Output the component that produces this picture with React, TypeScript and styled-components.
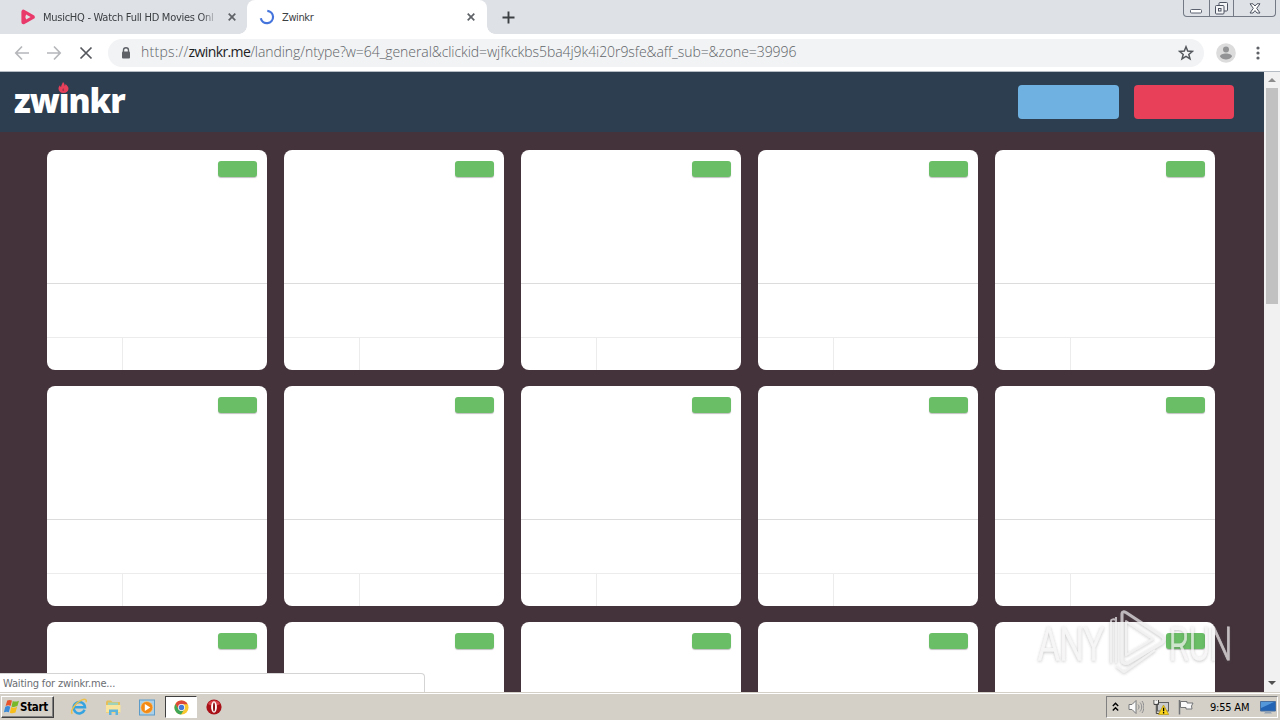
import React from "react";
import styled, { createGlobalStyle } from "styled-components";

const GlobalStyle = createGlobalStyle`
  * {
    box-sizing: border-box;
  }

  body {
    margin: 0;
    overflow: hidden;
    font-family: "DejaVu Sans Condensed", "DejaVu Sans", sans-serif;
    font-size: 11px;
  }

  svg {
    display: block;
    flex-shrink: 0;
  }
`;

const Screen = styled.div`
  position: relative;
  display: flex;
  flex-direction: column;
  width: 1280px;
  height: 720px;
  overflow: hidden;
`;

/* browser chrome */

const TabStrip = styled.div`
  display: flex;
  height: 34px;
  background-color: #dee1e6;
`;

const Tab = styled.div<{ $active?: boolean }>`
  position: relative;
  display: flex;
  align-items: center;
  width: ${(p) => (p.$active ? "240px" : "247px")};
  padding: 0 ${(p) => (p.$active ? "12px" : "11px")} 0
    ${(p) => (p.$active ? "12px" : "20px")};
  border-radius: 8px 8px 0 0;
  background-color: ${(p) => (p.$active ? "white" : "transparent")};

  &::before,
  &::after {
    content: "";
    display: ${(p) => (p.$active ? "block" : "none")};
    position: absolute;
    bottom: 0;
    width: 8px;
    height: 8px;
  }

  &::before {
    left: -8px;
    background: radial-gradient(circle at 0 0, transparent 7.5px, white 8px);
  }

  &::after {
    right: -8px;
    background: radial-gradient(circle at 100% 0, transparent 7.5px, white 8px);
  }
`;

const TabTitle = styled.div<{ $fade?: boolean; $spacing: string }>`
  flex: 1;
  margin: 0 9px 0 7px;
  overflow: hidden;
  white-space: nowrap;
  line-height: 16px;
  padding-top: 1px;
  letter-spacing: ${(p) => p.$spacing};
  color: #3c4043;
  mask-image: ${(p) =>
    p.$fade ? "linear-gradient(to right, black 90%, transparent)" : "none"};
`;

const NewTab = styled.div`
  display: flex;
  align-items: center;
  margin-left: 15px;
`;

const WindowButtons = styled.div`
  display: flex;
  width: 93px;
  height: 17px;
  margin: 0 4px 0 auto;
  border: 1px solid #737985;
  border-top: none;
  border-radius: 0 0 4px 4px;
`;

const WindowBtn = styled.div<{ $width: number }>`
  display: flex;
  align-items: center;
  justify-content: center;
  width: ${(p) => p.$width}px;

  & + & {
    border-left: 1px solid #737985;
  }
`;

const Toolbar = styled.div`
  display: flex;
  align-items: center;
  height: 38px;
  padding: 0 14px;
  border-bottom: 1px solid #b6bcc4;
  background-color: white;
`;

const NavIcons = styled.div`
  display: flex;
  flex-shrink: 0;
  gap: 16px;
  width: 94px;
`;

const AddressBar = styled.div`
  display: flex;
  flex-shrink: 0;
  align-items: center;
  width: 1096px;
  height: 28px;
  padding: 0 10px 0 12px;
  border-radius: 14px;
  background-color: #f1f3f4;
`;

const Url = styled.div`
  flex: 1;
  margin: -2px 0 0 9px;
  font-family: "Open Sans", sans-serif;
  font-size: 14px;
  font-weight: 300;
  line-height: 20px;
  letter-spacing: -0.07px;
  white-space: nowrap;
  color: #5f6368;
`;

const Scheme = styled.span`
  letter-spacing: 0.28px;
`;

const Host = styled.span`
  color: #202124;
  font-weight: 400;
  letter-spacing: -0.62px;
`;

const ToolbarEnd = styled.div`
  display: flex;
  align-items: center;
  gap: 20px;
  margin-left: 12px;
`;

/* page */

const Viewport = styled.div`
  display: flex;
  height: 620px;
  overflow: hidden;
`;

const Page = styled.div`
  width: 1264px;
  height: 620px;
  overflow: hidden;
  background-color: #44333b;
`;

const Header = styled.div`
  display: flex;
  align-items: flex-start;
  justify-content: space-between;
  height: 60px;
  padding: 13px 30px 0 14px;
  background-color: #2c3e50;
`;

const Logo = styled.div`
  position: relative;
  margin-top: -7px;
  font-family: "Open Sans", sans-serif;
  font-size: 33px;
  font-weight: 800;
  line-height: 45px;
  letter-spacing: -1px;
  color: white;
`;

const Flame = styled.div`
  position: absolute;
  top: 4px;
  left: 43px;
  width: 14px;
  height: 12px;
  padding-left: 1px;
  background-color: #2c3e50;
`;

const HeaderButtons = styled.div`
  display: flex;
  gap: 15px;
`;

const HeaderBtn = styled.button<{ $color: string; $width: number }>`
  width: ${(p) => p.$width}px;
  height: 34px;
  border: none;
  border-radius: 4px;
  background-color: ${(p) => p.$color};
`;

const Cards = styled.div`
  display: grid;
  grid-template-columns: repeat(5, 220px);
  gap: 16px 17px;
  padding: 18px 0 0 47px;
`;

const Card = styled.div`
  display: flex;
  flex-direction: column;
  height: 220px;
  border-radius: 8px;
  background-color: white;
`;

const CardPhoto = styled.div`
  display: flex;
  justify-content: flex-end;
  height: 134px;
  padding: 11px 10px;
  border-bottom: 1px solid #dcdcdc;
`;

const Badge = styled.div`
  width: 39px;
  height: 16px;
  border-radius: 3px;
  background-color: #6abf66;
  box-shadow: 0 1px 1px rgba(0, 0, 0, 0.25);
`;

const CardInfo = styled.div`
  height: 54px;
  border-bottom: 1px solid #ececec;
`;

const CardFooter = styled.div`
  width: 76px;
  height: 32px;
  border-right: 1px solid #ececec;
`;

const Scrollbar = styled.div`
  display: flex;
  flex-direction: column;
  align-items: center;
  justify-content: space-between;
  width: 16px;
  height: 620px;
  padding: 6px 0 7px;
  background-color: #f1f1f1;
`;

const Thumb = styled.div`
  width: 12px;
  height: 216px;
  margin: 6px 0 auto;
  background-color: #c1c1c1;
`;

const StatusBubble = styled.div`
  position: absolute;
  left: 0;
  top: 673px;
  width: 425px;
  height: 19px;
  padding-left: 3px;
  border: 1px solid #d4d4d4;
  border-width: 1px 1px 0 0;
  border-radius: 0 4px 0 0;
  background-color: white;
  color: #6b6e72;
  line-height: 19px;
  letter-spacing: -0.17px;
`;

const Watermark = styled.div`
  position: absolute;
  left: 1032px;
  top: 604px;
  opacity: 0.72;
`;

/* taskbar */

const Taskbar = styled.div`
  display: flex;
  align-items: center;
  height: 28px;
  padding: 1px 2px 0 1px;
  border-top: 1px solid #d4d0c8;
  box-shadow: inset 0 1px 0 white;
  background-color: #d4d0c8;
`;

const StartBtn = styled.button`
  display: flex;
  align-items: center;
  gap: 0;
  width: 53px;
  height: 22px;
  padding: 0 0 0 2px;
  border: 1px solid;
  border-color: white #404040 #404040 white;
  background-color: #d4d0c8;
  box-shadow: inset -1px -1px 0 #808080;
  font-family: "DejaVu Sans Condensed", sans-serif;
  font-size: 11.5px;
  font-weight: bold;
  letter-spacing: -0.3px;
  color: black;
`;

const QuickLaunch = styled.div`
  display: flex;
  align-items: center;
  margin-left: 8px;
`;

const LaunchItem = styled.div<{ $pressed?: boolean }>`
  display: flex;
  align-items: center;
  justify-content: center;
  width: ${(p) => (p.$pressed ? "32px" : "34px")};
  height: 22px;
  margin-left: ${(p) => (p.$pressed ? "1px" : "0")};
  border: 1px solid;
  border-color: ${(p) =>
    p.$pressed ? "#404040 white white #404040" : "transparent"};
  background-color: ${(p) => (p.$pressed ? "white" : "transparent")};
`;

const Tray = styled.div`
  display: flex;
  align-items: center;
  width: 172px;
  height: 22px;
  margin-left: auto;
  padding-left: 5px;
  border: 1px solid;
  border-color: #808080 white white #808080;
`;

const TrayIcons = styled.div`
  display: flex;
  align-items: center;
  gap: 9px;
  width: 98px;
`;

const Clock = styled.div`
  width: 50px;
  white-space: nowrap;
  letter-spacing: -0.2px;
  color: black;
`;

const CloseIcon = ({ size = 8, color = "#5f6368" }) => (
  <svg width={size} height={size} viewBox="0 0 8 8">
    <path d="M.7.7l6.6 6.6M7.3.7L.7 7.3" stroke={color} strokeWidth="1.7" />
  </svg>
);

const MusicIcon = () => (
  <svg width="16" height="16" viewBox="0 0 16 16">
    <path
      d="M3.500 2.800v10.400L12.700 8z"
      fill="white"
      stroke="#e9396b"
      strokeWidth="4.200"
      strokeLinejoin="round"
    />
    <path d="M6 5.400v5.200L10.600 8z" fill="#dee1e6" />
  </svg>
);

const Spinner = () => (
  <svg width="16" height="16" viewBox="0 0 16 16">
    <path
      d="M8.300 1.800A6.200 6.200 0 1 1 1.800 9.300"
      fill="none"
      stroke="#4575dc"
      strokeWidth="2.200"
    />
  </svg>
);

const Arrow = ({ flip = false }) => (
  <svg width="16" height="16" viewBox="0 0 16 16">
    <path
      d="M8 1.500L1.800 8 8 14.500M1.800 8H15"
      transform={flip ? "matrix(-1 0 0 1 16 0)" : undefined}
      fill="none"
      stroke="#b5b7ba"
      strokeWidth="1.700"
    />
  </svg>
);

const Lock = () => (
  <svg width="12" height="12" viewBox="0 0 12 12">
    <path
      d="M3.500 5V3.200a2.500 2.500 0 0 1 5 0V5"
      fill="none"
      stroke="#5f6368"
      strokeWidth="1.400"
    />
    <rect x="2" y="4.400" width="8" height="7.100" rx="1" fill="#5f6368" />
  </svg>
);

const Star = () => (
  <svg width="16" height="16" viewBox="0 0 16 16">
    <path
      d="M8 1.800l1.700 4.300 4.700.3-3.600 3 1.200 4.500L8 11.400l-4 2.500 1.200-4.500-3.600-3 4.700-.3z"
      fill="none"
      stroke="#54585d"
      strokeWidth="1.500"
    />
  </svg>
);

const Avatar = () => (
  <svg width="20" height="20" viewBox="0 0 20 20">
    <circle cx="10" cy="10" r="9.800" fill="#dcdcdd" />
    <circle cx="10" cy="6.400" r="3" fill="#929394" />
    <path d="M4 13.600c0-2 3-3 6-3s6 1 6 3c-1.200 2-3.500 3-6 3s-4.800-1-6-3z" fill="#929394" />
  </svg>
);

const Dots = () => (
  <svg width="4" height="14" viewBox="0 0 4 14">
    <g fill="#5f6368">
      <circle cx="2" cy="2" r="1.600" />
      <circle cx="2" cy="7" r="1.600" />
      <circle cx="2" cy="12" r="1.600" />
    </g>
  </svg>
);

const FlameIcon = () => (
  <svg width="11" height="12" viewBox="0 0 11 12">
    <path
      d="M5 0c1.500 1.300 1.700 2.500 1.500 3.700.8-.3 1-1 1-1.800C9.500 3.500 10.500 5 10.500 6.800 10.500 9.500 8.300 11 5.500 11 2.600 11 .5 9.400.5 6.800c0-1.600.6-2.600 1.500-3.500.1.900.4 1.500 1.100 1.800C3.200 3 4.300 1.800 5 0z"
      fill="#e8405a"
    />
    <path d="M5.600 9.300c-1.800-.8-1.800-2 0-3.300-.1 1.200 1.300 1.700 0 3.300z" fill="#a4344d" />
  </svg>
);

const WindowsFlag = () => (
  <svg width="16" height="16" viewBox="0 0 16 16">
    <path d="M3.200 1.600c1.800-1 3.400-.8 4.800 0L6.600 7C5.200 6.200 3.600 6.100 1.600 7z" fill="#e8552d" />
    <path d="M8.800 2c1.600.9 3.500.8 6.200-.3L13.400 7.100c-2 1-4.200 1.100-5.900.3z" fill="#79b82a" />
    <path d="M1.300 7.700c2-1 3.600-.8 5 0l-1.500 5.600c-1.400-.9-3.200-.8-5 .1z" fill="#3b8bd8" />
    <path d="M7.200 8.100c1.600.8 3.900.7 5.900-.3l-1.600 5.600c-2 1-4 1.100-5.600.3z" fill="#f7bd1b" />
  </svg>
);

const ExplorerIcon = () => (
  <svg width="18" height="18" viewBox="0 0 18 18">
    <path
      d="M14.600 11.800A5.700 5.700 0 1 1 15 9.300H5"
      fill="none"
      stroke="#35a3df"
      strokeWidth="2.500"
    />
    <path
      d="M2.300 15.700C-.3 13.200 5.500 4.400 12 1.900c3.300-1.200 5-.5 4 2.300"
      fill="none"
      stroke="#ecc04a"
      strokeWidth="1.500"
    />
  </svg>
);

const FolderIcon = () => (
  <svg width="17" height="17" viewBox="0 0 17 17">
    <path d="M1 3l1-1.500h4L7.500 3H15v11H1z" fill="#e5bf59" />
    <path d="M3 3.500h10v4H3z" fill="#9ed2ba" />
    <path d="M1 6h14.500v7.500H1z" fill="#f8e49c" />
    <path d="M4 16v-5.500h9V16h-2.500v-3h-4v3z" fill="#5cb4dd" />
  </svg>
);

const MediaIcon = () => (
  <svg width="16" height="17" viewBox="0 0 16 17">
    <rect x=".5" y="1" width="15" height="15" fill="#a9d0ea" stroke="#5d9cc9" />
    <circle cx="7.800" cy="8.500" r="6" fill="#f48a16" stroke="#fbd28f" strokeWidth=".6" />
    <path d="M5.800 4.900v7.200l5.500-3.600z" fill="white" />
  </svg>
);

const ChromeIcon = () => (
  <svg width="15" height="15" viewBox="0 0 16 16">
    <circle cx="8" cy="8" r="7.500" fill="#f9c72f" />
    <path d="M1.500 4.200A7.500 7.500 0 0 1 14.500 4.400H8L4.800 9.800z" fill="#dc4839" />
    <path d="M1.500 4.200A7.500 7.500 0 0 0 7.500 15.500L11 9.800 8 12 4.800 9.800z" fill="#3fa557" />
    <circle cx="8" cy="8" r="3.700" fill="white" />
    <circle cx="8" cy="8" r="2.900" fill="#4679d8" />
  </svg>
);

const OperaIcon = () => (
  <svg width="16" height="16" viewBox="0 0 16 16">
    <circle cx="8" cy="8" r="7.600" fill="#a91119" />
    <path d="M2 5a6.800 6.800 0 0 1 12 0c-3 2-9 2-12 0z" fill="#d9434a" />
    <ellipse cx="8" cy="8" rx="2.900" ry="5.800" fill="white" />
    <ellipse cx="8" cy="8" rx="1" ry="4.500" fill="#8d1015" />
  </svg>
);

const SpeakerIcon = () => (
  <svg width="16" height="16" viewBox="0 0 16 16">
    <path d="M1 5.500h3L8 1.500v13l-4-4H1z" fill="#fafafa" stroke="#77787a" />
    <path
      d="M10 5.500c1.400 1.500 1.400 3.500 0 5M12 3.500c2.300 2.600 2.300 6.400 0 9M14 2c2.500 3.500 2.500 8.500 0 12"
      fill="none"
      stroke="#8b8c8e"
    />
  </svg>
);

const NetworkIcon = () => (
  <svg width="16" height="16" viewBox="0 0 16 16">
    <rect x="4.500" y="3.500" width="11" height="8.500" fill="#c9cbcd" stroke="#5e6062" />
    <path d="M1 1v4.500h4.500V1M3.300 1v3M3.300 6v8.500H8" fill="none" stroke="#444" />
    <path d="M1.500 1.500h3.500v3h-3.500z" fill="#f4f4f4" />
    <path d="M10.500 6L15.700 15.500H5.500z" fill="#fbd51b" stroke="#b3930b" strokeWidth=".7" />
    <path d="M10.600 8.800v3.400M10.600 13v1.400" stroke="black" strokeWidth="1.300" />
  </svg>
);

const FlagIcon = () => (
  <svg width="17" height="16" viewBox="0 0 17 16">
    <path d="M2.500 2.500h6.500v1.500h6l-1.500 3 .5 3H8V8.500H2.500z" fill="#fafafa" stroke="#737476" />
    <path d="M1.500 1v14.500" stroke="#737476" strokeWidth="1.500" />
  </svg>
);

const MonitorIcon = () => (
  <svg width="16" height="15" viewBox="0 0 16 15">
    <path d="M.5 1.500h15v9.500H.5z" fill="#2464b5" stroke="#496f9f" />
    <path d="M1 2h13L1 8z" fill="#5598da" />
    <path d="M6 11h4l2 2.500H4z" fill="#93a2b3" />
  </svg>
);

const CardItem = () => (
  <Card>
    <CardPhoto>
      <Badge />
    </CardPhoto>
    <CardInfo />
    <CardFooter />
  </Card>
);

const WatermarkLogo = () => (
  <svg width="206" height="76" viewBox="0 0 206 76">
    <defs>
      <filter id="soft" x="-10%" y="-10%" width="120%" height="130%">
        <feDropShadow dx="0" dy="1" stdDeviation="1.500" floodColor="#555" floodOpacity=".5" />
      </filter>
    </defs>
    <g filter="url(#soft)">
      <g
        fill="#f5f3f4"
        stroke="#f5f3f4"
        strokeWidth="1"
        fontFamily="Roboto, sans-serif"
        fontWeight="300"
        fontSize="46"
      >
        <text x="6" y="55.500" textLength="66" lengthAdjust="spacingAndGlyphs">
          ANY
        </text>
        <text x="137" y="55.500" textLength="63" lengthAdjust="spacingAndGlyphs">
          RUN
        </text>
      </g>
      <g fill="none" stroke="#eeecee" strokeWidth="3" strokeLinejoin="round">
        <path d="M79 59V17c0-2 3-2 5-1M84 59V13" strokeWidth="2" />
        <path d="M90 9.500c0-2 2-2 4-1l35 23c4 3 4 5 0 8L96 59c-3 1-6 0-6-3z" />
        <path d="M94 17v34l27-16zM84 62l8 6 31-22" strokeWidth="2" />
      </g>
    </g>
  </svg>
);

const App = () => {
  return (
    <>
      <GlobalStyle />
      <Screen>
        <TabStrip>
          <Tab>
            <MusicIcon />
            <TabTitle $fade $spacing="-0.27px">
              MusicHQ - Watch Full HD Movies Onl
            </TabTitle>
            <CloseIcon />
          </Tab>
          <Tab $active>
            <Spinner />
            <TabTitle $spacing="-0.4px">Zwinkr</TabTitle>
            <CloseIcon />
          </Tab>
          <NewTab>
            <svg width="13" height="13" viewBox="0 0 13 13">
              <path d="M6.500.5v12M.5 6.500h12" stroke="#3c4043" strokeWidth="1.900" />
            </svg>
          </NewTab>
          <WindowButtons>
            <WindowBtn $width={25}>
              <svg width="12" height="15" viewBox="0 0 12 15">
                <rect x=".5" y="8.500" width="11" height="3.500" rx="1" fill="white" stroke="#5c6270" />
              </svg>
            </WindowBtn>
            <WindowBtn $width={25}>
              <svg width="13" height="13" viewBox="0 0 13 13">
                <g fill="#f3f4f6" stroke="#4d5360">
                  <rect x="4" y=".5" width="8.500" height="8.500" rx="1" />
                  <rect x=".5" y="3.500" width="8.500" height="8.500" rx="1" />
                  <rect x="3.500" y="6.500" width="2.500" height="2.500" />
                </g>
              </svg>
            </WindowBtn>
            <WindowBtn $width={42}>
              <svg width="12" height="11" viewBox="0 0 12 11">
                <path
                  d="M1 .8h3L6 3l2-2.200h3L7.700 5.300 11 10H8L6 7.600 4 10H1l3.300-4.700z"
                  fill="white"
                  stroke="#4d5360"
                />
              </svg>
            </WindowBtn>
          </WindowButtons>
        </TabStrip>

        <Toolbar>
          <NavIcons>
            <Arrow />
            <Arrow flip />
            <svg width="16" height="16" viewBox="0 0 16 16">
              <path d="M2.500 2.500l11 11M13.500 2.500l-11 11" stroke="#54585d" strokeWidth="1.700" />
            </svg>
          </NavIcons>
          <AddressBar>
            <Lock />
            <Url>
              <Scheme>https://</Scheme>
              <Host>zwinkr.me</Host>
              /landing/ntype?w=64_general&amp;clickid=wjfkckbs5ba4j9k4i20r9sfe&amp;aff_sub=&amp;zone=39996
            </Url>
            <Star />
          </AddressBar>
          <ToolbarEnd>
            <Avatar />
            <Dots />
          </ToolbarEnd>
        </Toolbar>

        <Viewport>
          <Page>
            <Header>
              <Logo>
                zwinkr
                <Flame>
                  <FlameIcon />
                </Flame>
              </Logo>
              <HeaderButtons>
                <HeaderBtn $color="#6fb2e2" $width={101} />
                <HeaderBtn $color="#e84059" $width={100} />
              </HeaderButtons>
            </Header>
            <Cards>
              {Array.from({ length: 15 }, (_, i) => (
                <CardItem key={i} />
              ))}
            </Cards>
          </Page>
          <Scrollbar>
            <svg width="8" height="4" viewBox="0 0 8 4">
              <path d="M4 0l4 4H0z" fill="#8c8c8c" />
            </svg>
            <Thumb />
            <svg width="8" height="4" viewBox="0 0 8 4">
              <path d="M4 4l4-4H0z" fill="#505050" />
            </svg>
          </Scrollbar>
        </Viewport>

        <Taskbar>
          <StartBtn>
            <WindowsFlag />
            Start
          </StartBtn>
          <QuickLaunch>
            <LaunchItem>
              <ExplorerIcon />
            </LaunchItem>
            <LaunchItem>
              <FolderIcon />
            </LaunchItem>
            <LaunchItem>
              <MediaIcon />
            </LaunchItem>
            <LaunchItem $pressed>
              <ChromeIcon />
            </LaunchItem>
            <LaunchItem>
              <OperaIcon />
            </LaunchItem>
          </QuickLaunch>
          <Tray>
            <TrayIcons>
              <svg width="7" height="10" viewBox="0 0 7 10">
                <path
                  d="M.8 4l2.700-2.700L6.200 4M.8 8.500l2.700-2.700 2.700 2.700"
                  fill="none"
                  stroke="black"
                  strokeWidth="1.400"
                />
              </svg>
              <SpeakerIcon />
              <NetworkIcon />
              <FlagIcon />
            </TrayIcons>
            <Clock>9:55 AM</Clock>
            <MonitorIcon />
          </Tray>
        </Taskbar>

        <StatusBubble>Waiting for zwinkr.me...</StatusBubble>
        <Watermark>
          <WatermarkLogo />
        </Watermark>
      </Screen>
    </>
  );
};

export default App;
